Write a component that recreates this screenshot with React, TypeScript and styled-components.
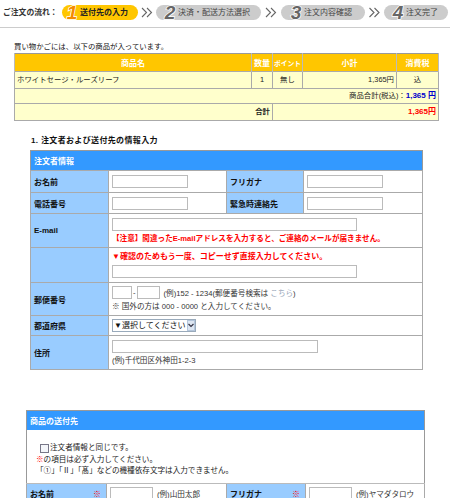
import React from "react";
import styled, { createGlobalStyle } from "styled-components";

const Global = createGlobalStyle`
  html, body { margin: 0; padding: 0; background: #fff; overflow: hidden; }
  body { font-family: "Liberation Sans", "Noto Sans CJK JP", sans-serif; font-size: 8px; color: #111; }
  th, td { box-sizing: border-box; }
`;
const Page = styled.div`
  width: 450px; height: 498px; overflow: hidden; display: flex; flex-direction: column;
  & > * { flex: none; }
`;
const Flow = styled.div`
  height: 28px; box-sizing: border-box; border-bottom: 1px solid #ccc; display: flex; align-items: flex-start;
  padding: 5px 0 0 3px;
`;
const FlowLabel = styled.span`
  width: 59px; flex: none; line-height: 15px; font-size: 7.8px; font-weight: bold; color: #333; white-space: nowrap;
`;
const Pill = styled.div<{ $on?: boolean; $w: number; $pad: number }>`
  width: ${p => p.$w}px; height: 15px; border-radius: 8px; background: ${p => (p.$on ? "#ffc600" : "#ccc")};
  display: flex; align-items: center; box-sizing: border-box; padding-left: ${p => p.$pad}px; flex: none;
  color: ${p => (p.$on ? "#222" : "#444")}; font-size: 8px; line-height: 15px; white-space: nowrap;
  font-weight: ${p => (p.$on ? "bold" : "normal")};
`;
const Num = styled.b<{ $on?: boolean }>`
  font: italic bold 19px/15px "Liberation Sans Narrow", "Liberation Sans", sans-serif;
  width: 12px; margin-right: 2px; flex: none; text-align: center;
  color: ${p => (p.$on ? "#f58a00" : "#666")};
  -webkit-text-stroke: 1.5px #fff;
  paint-order: stroke fill;
`;
const Chevron = styled.svg<{ $w: number }>`
  width: ${p => p.$w}px; height: 15px; flex: none;
`;
const Intro = styled.div`
  margin: 13px 0 0 14px; height: 12px; line-height: 12px; font-size: 7.4px; white-space: nowrap;
`;
const CartTable = styled.table`
  margin: 0 0 0 14px; width: 424px; border-collapse: collapse; table-layout: fixed; font-size: 7.4px;
  border: 1px solid #999;
`;
const CartHead = styled.th<{ $size?: number }>`
  height: 18px; padding: 0; background: #ffc600; color: #fff; font-weight: bold; text-align: center;
  font-size: ${p => p.$size ?? 8}px;
  border: 1px solid #bbb; border-width: 0 1px; white-space: nowrap;
`;
const SoftRow = styled.tr`
  & > * { border-bottom-color: #ddd; }
`;
const CartCell = styled.td<{ $align?: string; $h: number; $bold?: boolean }>`
  height: ${p => p.$h}px; padding: 0 2px; background: #ffc; border: 1px solid #aaa; white-space: nowrap;
  text-align: ${p => p.$align ?? "left"};
  color: #222;
  line-height: 10px;
  font-weight: ${p => (p.$bold ? "bold" : "normal")};
`;
const Price = styled.b<{ $color: string }>` color: ${p => p.$color}; font-size: 8px; `;
const SectionTitle = styled.div`
  margin: 14px 0 0 31px; height: 12px; line-height: 12px; font-weight: bold; font-size: 8px; letter-spacing: 0.35px; white-space: nowrap;
`;
const FormTable = styled.table<{ $left: number; $w: number; $top: number }>`
  margin: ${p => p.$top}px 0 0 ${p => p.$left}px; width: ${p => p.$w}px; border-collapse: collapse; table-layout: fixed;
  font-size: 8px; border: 1.5px solid #999;
`;
const HeadCell = styled.th<{ $h: number }>`
  height: ${p => p.$h}px; padding: 0 0 0 3px; background: #39f; color: #fff; font-weight: bold; font-size: 8px; text-align: left;
`;
const Label = styled.th<{ $h: number }>`
  height: ${p => p.$h}px; padding: 0 3px; background: #9cf; color: #111; font-weight: bold; font-size: 8px; text-align: left;
  border: 1px solid #aaa; white-space: nowrap;
`;
const Field = styled.td`
  padding: 0 3px; background: #fff; border: 1px solid #aaa; white-space: nowrap; vertical-align: middle; overflow: hidden;
`;
const Input = styled.input<{ $w: number }>`
  display: block; box-sizing: border-box; width: ${p => p.$w}px; height: 13px; padding: 0; margin: 0; background: #fff;
  border: 1px solid #bbb; border-radius: 0; outline: none;
`;
const InlineInput = styled(Input)` display: inline-block; vertical-align: middle; `;
const Note = styled.div<{ $color?: string; $bold?: boolean }>`
  margin-top: 3px; line-height: 10px; height: 10px; font-size: 7.6px; white-space: nowrap;
  color: ${p => p.$color ?? "#333"};
  font-weight: ${p => (p.$bold ? "bold" : "normal")};
`;
const Warn = styled(Note)` margin: 0 0 3px; font-size: 8px; `;
const SelectBox = styled.div`
  position: relative; width: 84px; height: 13px;
`;
const Select = styled.select`
  width: 100%; height: 100%; box-sizing: border-box; font-size: 8px; padding: 0 0 0 1px; margin: 0; display: block; font-family: inherit;
  background: #fff; color: #111; border: 1px solid #9ab; border-radius: 0; appearance: none;
`;
const SelectArrow = styled.span`
  position: absolute; right: 1px; top: 1px; width: 8px; height: 11px; background: #dde6f2; border: 1px solid #b4c6dc; box-sizing: border-box;
  display: flex; align-items: center; justify-content: center; pointer-events: none;
`;
const ZipLine = styled.div` display: flex; align-items: center; gap: 1px; height: 13px; white-space: nowrap; color: #333; font-size: 7.6px; `;
const ZipLink = styled.a` color: #99a6b8; text-decoration: none; `;
const Intro2 = styled.td`
  height: 54px; padding: 7px 0 0 9px; background: #fff; line-height: 12px; font-size: 7.6px; color: #222; border-bottom: 1px solid #bbb; vertical-align: middle; white-space: nowrap;
`;
const Line = styled.div` display: flex; align-items: center; height: 11.5px; `;
const Check = styled.input`
  width: 9px; height: 9px; margin: 0 1px 0 4px; appearance: none; border: 1px solid #778; background: #f4f6fa; border-radius: 0;
`;
const Req = styled.span` color: #f00; `;
const ReqRight = styled.span` float: right; color: #f00; margin-right: 2px; font-weight: normal; `;
const Small = styled.span` color: #333; margin-left: 3px; `;

const Arrow = ({ w }: { w: number }) => (
  <Chevron $w={w} viewBox={`0 0 ${w} 15`}>
    <g transform={`translate(${w / 2 - 5} 0)`}>
      <path d="M0 3l4.5 4.5L0 12M5 3l4.5 4.5L5 12" fill="none" stroke="#666" strokeWidth="1.1" />
    </g>
  </Chevron>
);

export default function App() {
  return (
    <Page>
      <Global />
      <Flow>
        <FlowLabel>ご注文の流れ：</FlowLabel>
        <Pill $on $w={76} $pad={4}><Num $on>1</Num>送付先の入力</Pill>
        <Arrow w={18} />
        <Pill $w={105} $pad={8}><Num>2</Num>決済・配送方法選択</Pill>
        <Arrow w={20} />
        <Pill $w={84} $pad={9}><Num>3</Num>注文内容確認</Pill>
        <Arrow w={19} />
        <Pill $w={64} $pad={8}><Num>4</Num>注文完了</Pill>
      </Flow>
      <Intro>買い物かごには、以下の商品が入っています。</Intro>
      <CartTable>
        <colgroup><col style={{ width: 237 }} /><col style={{ width: 21 }} /><col style={{ width: 30 }} /><col style={{ width: 94 }} /><col style={{ width: 42 }} /></colgroup>
        <thead>
          <tr><CartHead>商品名</CartHead><CartHead>数量</CartHead><CartHead $size={6.8}>ポイント</CartHead><CartHead>小計</CartHead><CartHead>消費税</CartHead></tr>
        </thead>
        <tbody>
          <SoftRow>
            <CartCell $h={17}>ホワイトセージ・ルーズリーフ</CartCell>
            <CartCell $h={17} $align="center">1</CartCell>
            <CartCell $h={17} $align="center">無し</CartCell>
            <CartCell $h={17} $align="right">1,365円</CartCell>
            <CartCell $h={17} $align="center">込</CartCell>
          </SoftRow>
          <tr><CartCell colSpan={5} $h={15} $align="right">商品合計(税込)：<Price $color="#00c">1,365 円</Price></CartCell></tr>
          <tr>
            <CartCell colSpan={2} $h={17} $align="right" $bold>合計</CartCell>
            <CartCell colSpan={3} $h={17} $align="right"><Price $color="#f00">1,365円</Price></CartCell>
          </tr>
        </tbody>
      </CartTable>
      <SectionTitle>1. 注文者および送付先の情報入力</SectionTitle>
      <FormTable $left={30} $w={392} $top={3}>
        <colgroup><col style={{ width: 78 }} /><col style={{ width: 118 }} /><col style={{ width: 77 }} /><col style={{ width: 119 }} /></colgroup>
        <tbody>
          <tr><HeadCell colSpan={4} $h={20}>注文者情報</HeadCell></tr>
          <SoftRow><Label $h={22}>お名前</Label><Field><Input $w={76} /></Field><Label $h={22}>フリガナ</Label><Field><Input $w={76} /></Field></SoftRow>
          <tr><Label $h={21}>電話番号</Label><Field><Input $w={76} /></Field><Label $h={21}>緊急時連絡先</Label><Field><Input $w={76} /></Field></tr>
          <tr><Label $h={34}>E-mail</Label><Field colSpan={3}><Input $w={245} /><Note $color="#f00" $bold>【注意】間違ったE-mailアドレスを入力すると、ご連絡のメールが届きません。</Note></Field></tr>
          <tr><Label $h={35} /><Field colSpan={3}><Warn $color="#f00" $bold>▼確認のためもう一度、コピーせず直接入力してください。</Warn><Input $w={245} /></Field></tr>
          <tr><Label $h={33}>郵便番号</Label><Field colSpan={3}><ZipLine><InlineInput $w={20} />-<InlineInput $w={23} /><Small>(例)152 - 1234(郵便番号検索は <ZipLink>こちら</ZipLink>)</Small></ZipLine><Note>※ 国外の方は 000 - 0000 と入力してください。</Note></Field></tr>
          <tr><Label $h={20}>都道府県</Label><Field colSpan={3}><SelectBox><Select defaultValue="x"><option value="x">▼選択してください</option></Select><SelectArrow><svg width="6" height="5" viewBox="0 0 6 5"><path d="M0.5 1l2.5 2.5L5.5 1" fill="none" stroke="#334" strokeWidth="1.2" /></svg></SelectArrow></SelectBox></Field></tr>
          <tr><Label $h={34}>住所</Label><Field colSpan={3}><Input $w={206} /><Note>(例)千代田区外神田1-2-3</Note></Field></tr>
        </tbody>
      </FormTable>
      <FormTable $left={26} $w={398} $top={40}>
        <colgroup><col style={{ width: 80 }} /><col style={{ width: 120 }} /><col style={{ width: 79 }} /><col style={{ width: 119 }} /></colgroup>
        <tbody>
          <tr><HeadCell colSpan={4} $h={19}>商品の送付先</HeadCell></tr>
          <tr><Intro2 colSpan={4}>
            <Line><Check type="checkbox" />注文者情報と同じです。</Line>
            <Line><Req>※</Req>の項目は必ず入力してください。</Line>
            <Line>「①」「Ⅱ」「髙」などの機種依存文字は入力できません。</Line>
          </Intro2></tr>
          <tr>
            <Label $h={20}>お名前<ReqRight>※</ReqRight></Label>
            <Field><ZipLine><InlineInput $w={43} /><Small>(例)山田太郎</Small></ZipLine></Field>
            <Label $h={20}>フリガナ<ReqRight>※</ReqRight></Label>
            <Field><ZipLine><InlineInput $w={43} /><Small>(例)ヤマダタロウ</Small></ZipLine></Field>
          </tr>
        </tbody>
      </FormTable>
    </Page>
  );
}
